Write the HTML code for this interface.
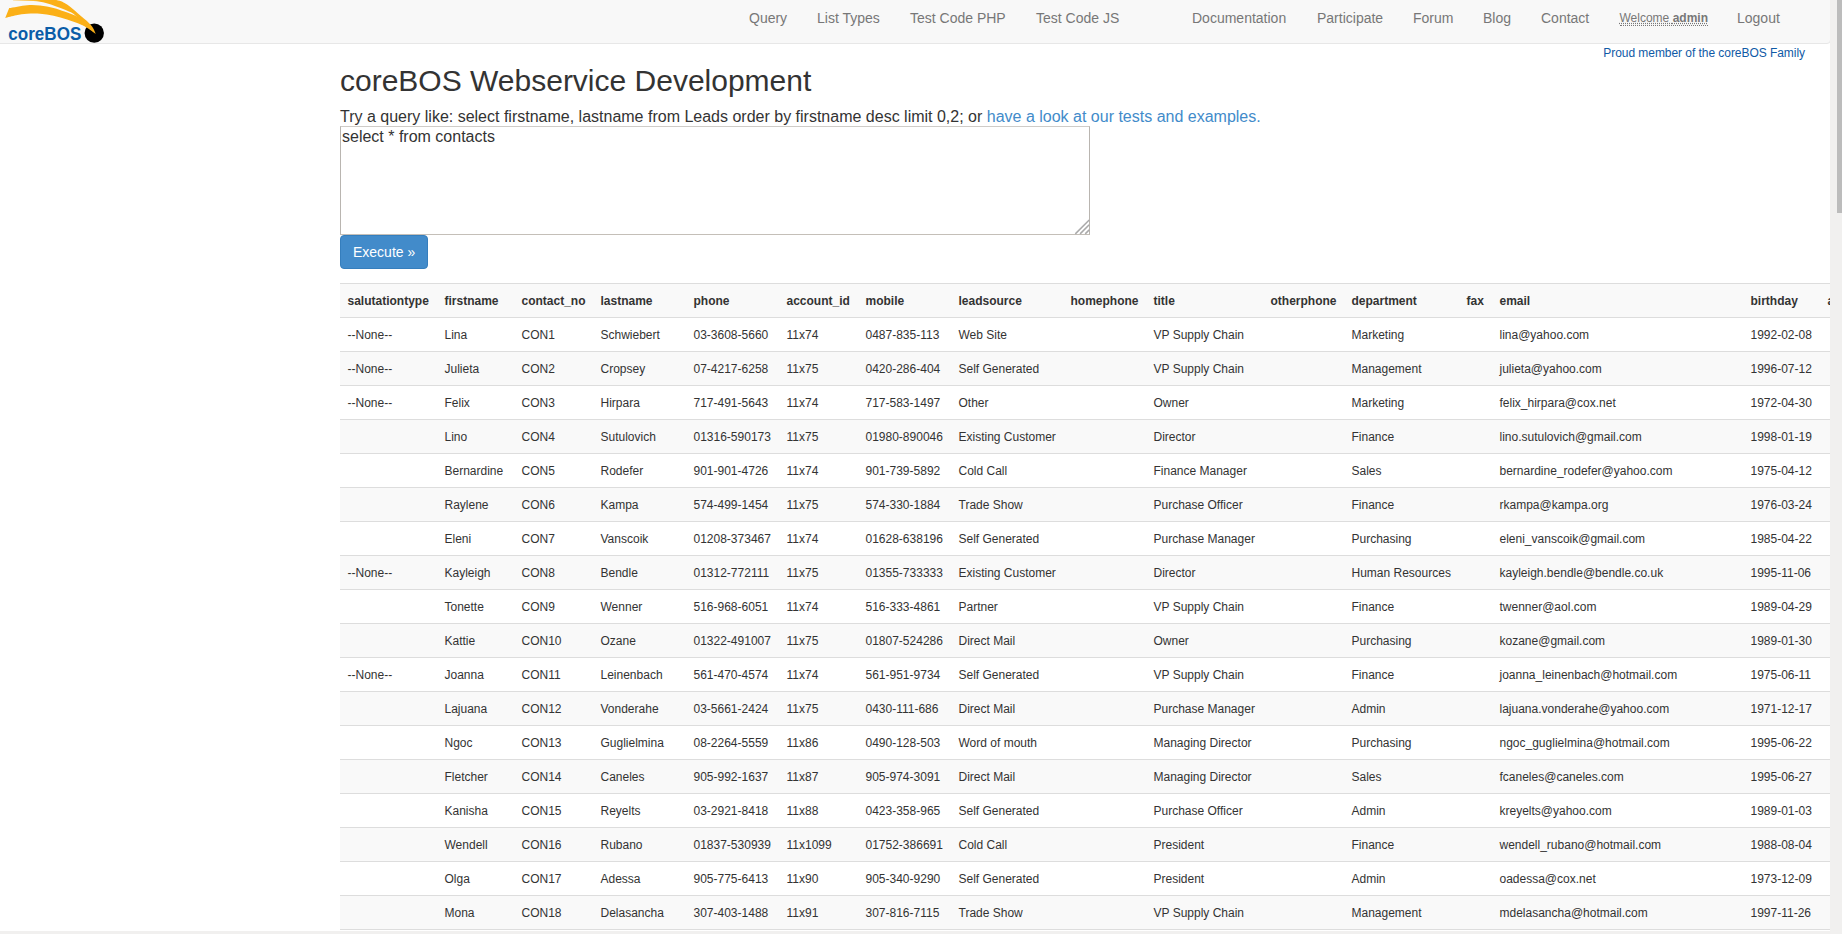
<!DOCTYPE html>
<html><head><meta charset="utf-8"><title>coreBOS Webservice Development</title>
<style>
html,body{margin:0;padding:0;}
body{width:1842px;height:934px;overflow:hidden;position:relative;background:#fff;font-family:"Liberation Sans",sans-serif;color:#333;font-size:14px;line-height:20px;}
.nav{position:absolute;left:-1px;top:-5px;width:1830px;height:47px;background:#f8f8f8;border:1px solid #e7e7e7;border-radius:0 0 4px 0;box-sizing:content-box;}
.logo{position:absolute;left:0;top:0;}
.ni{position:absolute;top:8px;font-size:14px;line-height:20px;color:#777;white-space:nowrap;}
.ni abbr{font-size:12px;line-height:12px;text-decoration:underline dotted;border-bottom:1px dotted #777;}
.proud{position:absolute;right:37px;top:45px;font-size:12px;line-height:17px;color:#0f5aa6;white-space:nowrap;letter-spacing:-0.05px;}
h1{position:absolute;left:340px;top:63px;margin:0;font-size:30px;line-height:36px;font-weight:normal;color:#333;white-space:nowrap;}
.intro{position:absolute;left:340px;top:106px;font-size:16px;line-height:22px;white-space:nowrap;}
.intro a{color:#428bca;text-decoration:none;}
.ta{position:absolute;left:340px;top:126px;width:748px;height:107px;border:1px solid #b9b5b0;border-top-color:#cfccc8;border-bottom-color:#c4bfb8;background:#fff;}
.ta span{position:absolute;left:1px;top:1px;font-size:16px;line-height:18px;white-space:nowrap;}
.grip{position:absolute;right:0;bottom:0;}
.btn{position:absolute;left:340px;top:235px;width:86px;height:32px;background:#428bca;border:1px solid #357ebd;border-radius:4px;color:#fff;font-size:14px;line-height:20px;}
.btn span{position:absolute;left:12px;top:6px;white-space:nowrap;}
table.res{position:absolute;left:340px;top:283px;border-collapse:collapse;table-layout:fixed;width:1600px;font-size:12px;}
table.res td,table.res th{padding:9px 8px 7px 7.5px;line-height:17px;border-top:1px solid #ddd;text-align:left;white-space:nowrap;overflow:hidden;vertical-align:top;}
table.res th{font-weight:bold;}
table.res tr:nth-child(odd){background:#f9f9f9;}
.vs{position:absolute;left:1830px;top:0;width:12px;height:934px;background:#f1f0ef;}
.vth{position:absolute;left:1837px;top:0;width:5px;height:213px;background:#bcbcbc;}
.hs{position:absolute;left:0;top:931px;width:1842px;height:3px;background:#f1f0ef;}
</style></head><body>
<div class="nav"></div>
<svg class="logo" width="110" height="44" viewBox="0 0 110 44">
  <defs><linearGradient id="fade" x1="13" y1="0" x2="40" y2="0" gradientUnits="userSpaceOnUse"><stop offset="0" stop-color="#fbb017" stop-opacity="0.25"/><stop offset="1" stop-color="#fbb017" stop-opacity="1"/></linearGradient></defs>
  <circle cx="94.25" cy="33.1" r="9.7" fill="#000"/>
  <path d="M13.00,-1.50 C16.67,-1.50 27.78,-1.75 35.00,-1.50 C42.22,-1.25 50.95,-1.02 56.30,0.00 C61.65,1.02 63.48,2.33 67.10,4.60 C70.72,6.87 74.37,10.53 78.00,13.60 C81.63,16.67 86.40,20.60 88.90,23.00 C91.40,25.40 91.87,26.18 93.00,28.00 C94.13,29.82 95.25,32.92 95.70,33.90 L95.70,33.90 C94.08,32.50 89.18,28.35 86.00,25.50 C82.82,22.65 78.83,18.83 76.60,16.80 C74.37,14.77 74.63,14.52 72.60,13.30 C70.57,12.08 67.57,10.82 64.40,9.50 C61.23,8.18 57.17,6.62 53.60,5.40 C50.03,4.18 46.95,2.92 43.00,2.20 C39.05,1.48 34.90,1.32 29.90,1.10 C24.90,0.88 15.82,0.93 13.00,0.90 Z" fill="url(#fade)"/>
  <path d="M5.2,17.9 L9.2,8.1 C12.18,7.62 21.97,5.63 27.10,5.20 C32.23,4.77 35.58,5.05 40.00,5.50 C44.42,5.95 49.53,6.92 53.60,7.90 C57.67,8.88 61.23,10.32 64.40,11.40 C67.57,12.48 70.00,13.27 72.60,14.40 C75.20,15.53 77.43,16.43 80.00,18.20 C82.57,19.97 85.38,22.38 88.00,25.00 C90.62,27.62 94.42,32.42 95.70,33.90 L95.70,33.90 C94.20,32.85 89.20,29.18 86.70,27.60 C84.20,26.02 83.97,25.75 80.70,24.40 C77.43,23.05 71.62,20.95 67.10,19.50 C62.58,18.05 58.12,16.67 53.60,15.70 C49.08,14.73 44.42,14.02 40.00,13.70 C35.58,13.38 31.05,13.55 27.10,13.80 C23.15,14.05 19.95,14.52 16.30,15.20 C12.65,15.88 7.05,17.45 5.20,17.90 Z" fill="#fbb017"/>
  <text x="8.3" y="40.4" font-family="Liberation Sans" font-weight="bold" font-size="18" fill="#0b5da8" textLength="73" lengthAdjust="spacingAndGlyphs">coreBOS</text>
</svg>
<span class="ni" style="left:749px">Query</span>
<span class="ni" style="left:817px">List Types</span>
<span class="ni" style="left:910px">Test Code PHP</span>
<span class="ni" style="left:1036px">Test Code JS</span>
<span class="ni" style="left:1192px">Documentation</span>
<span class="ni" style="left:1317px">Participate</span>
<span class="ni" style="left:1413px">Forum</span>
<span class="ni" style="left:1483px">Blog</span>
<span class="ni" style="left:1541px">Contact</span>
<span class="ni" style="left:1619.5px;top:7px"><abbr>Welcome <b>admin</b></abbr></span>
<span class="ni" style="left:1737px">Logout</span>
<span class="proud">Proud member of the coreBOS Family</span>
<h1>coreBOS Webservice Development</h1>
<div class="intro">Try a query like: select firstname, lastname from Leads order by firstname desc limit 0,2; or <a>have a look at our tests and examples.</a></div>
<div class="ta"><span>select * from contacts</span>
</div>
<svg style="position:absolute;left:1074px;top:219px" width="16" height="16" viewBox="0 0 16 16"><path d="M1.3,14.9 L15.2,1 M6.1,14.9 L15.2,5.8 M11.2,14.9 L15.2,10.9" stroke="#aaaaaa" stroke-width="1.5" fill="none"/></svg>
<div class="btn"><span>Execute &raquo;</span></div>
<table class="res"><colgroup><col style="width:97px"><col style="width:77px"><col style="width:79px"><col style="width:93px"><col style="width:93px"><col style="width:79px"><col style="width:93px"><col style="width:112px"><col style="width:83px"><col style="width:117px"><col style="width:81px"><col style="width:115px"><col style="width:33px"><col style="width:251px"><col style="width:77px"><col style="width:120px"></colgroup><tbody>
<tr><th>salutationtype</th><th>firstname</th><th>contact_no</th><th>lastname</th><th>phone</th><th>account_id</th><th>mobile</th><th>leadsource</th><th>homephone</th><th>title</th><th>otherphone</th><th>department</th><th>fax</th><th>email</th><th>birthday</th><th>assigned_user_id</th></tr>
<tr><td>--None--</td><td>Lina</td><td>CON1</td><td>Schwiebert</td><td>03-3608-5660</td><td>11x74</td><td>0487-835-113</td><td>Web Site</td><td></td><td>VP Supply Chain</td><td></td><td>Marketing</td><td></td><td>lina@yahoo.com</td><td>1992-02-08</td><td></td></tr>
<tr><td>--None--</td><td>Julieta</td><td>CON2</td><td>Cropsey</td><td>07-4217-6258</td><td>11x75</td><td>0420-286-404</td><td>Self Generated</td><td></td><td>VP Supply Chain</td><td></td><td>Management</td><td></td><td>julieta@yahoo.com</td><td>1996-07-12</td><td></td></tr>
<tr><td>--None--</td><td>Felix</td><td>CON3</td><td>Hirpara</td><td>717-491-5643</td><td>11x74</td><td>717-583-1497</td><td>Other</td><td></td><td>Owner</td><td></td><td>Marketing</td><td></td><td>felix_hirpara@cox.net</td><td>1972-04-30</td><td></td></tr>
<tr><td></td><td>Lino</td><td>CON4</td><td>Sutulovich</td><td>01316-590173</td><td>11x75</td><td>01980-890046</td><td>Existing Customer</td><td></td><td>Director</td><td></td><td>Finance</td><td></td><td>lino.sutulovich@gmail.com</td><td>1998-01-19</td><td></td></tr>
<tr><td></td><td>Bernardine</td><td>CON5</td><td>Rodefer</td><td>901-901-4726</td><td>11x74</td><td>901-739-5892</td><td>Cold Call</td><td></td><td>Finance Manager</td><td></td><td>Sales</td><td></td><td>bernardine_rodefer@yahoo.com</td><td>1975-04-12</td><td></td></tr>
<tr><td></td><td>Raylene</td><td>CON6</td><td>Kampa</td><td>574-499-1454</td><td>11x75</td><td>574-330-1884</td><td>Trade Show</td><td></td><td>Purchase Officer</td><td></td><td>Finance</td><td></td><td>rkampa@kampa.org</td><td>1976-03-24</td><td></td></tr>
<tr><td></td><td>Eleni</td><td>CON7</td><td>Vanscoik</td><td>01208-373467</td><td>11x74</td><td>01628-638196</td><td>Self Generated</td><td></td><td>Purchase Manager</td><td></td><td>Purchasing</td><td></td><td>eleni_vanscoik@gmail.com</td><td>1985-04-22</td><td></td></tr>
<tr><td>--None--</td><td>Kayleigh</td><td>CON8</td><td>Bendle</td><td>01312-772111</td><td>11x75</td><td>01355-733333</td><td>Existing Customer</td><td></td><td>Director</td><td></td><td>Human Resources</td><td></td><td>kayleigh.bendle@bendle.co.uk</td><td>1995-11-06</td><td></td></tr>
<tr><td></td><td>Tonette</td><td>CON9</td><td>Wenner</td><td>516-968-6051</td><td>11x74</td><td>516-333-4861</td><td>Partner</td><td></td><td>VP Supply Chain</td><td></td><td>Finance</td><td></td><td>twenner@aol.com</td><td>1989-04-29</td><td></td></tr>
<tr><td></td><td>Kattie</td><td>CON10</td><td>Ozane</td><td>01322-491007</td><td>11x75</td><td>01807-524286</td><td>Direct Mail</td><td></td><td>Owner</td><td></td><td>Purchasing</td><td></td><td>kozane@gmail.com</td><td>1989-01-30</td><td></td></tr>
<tr><td>--None--</td><td>Joanna</td><td>CON11</td><td>Leinenbach</td><td>561-470-4574</td><td>11x74</td><td>561-951-9734</td><td>Self Generated</td><td></td><td>VP Supply Chain</td><td></td><td>Finance</td><td></td><td>joanna_leinenbach@hotmail.com</td><td>1975-06-11</td><td></td></tr>
<tr><td></td><td>Lajuana</td><td>CON12</td><td>Vonderahe</td><td>03-5661-2424</td><td>11x75</td><td>0430-111-686</td><td>Direct Mail</td><td></td><td>Purchase Manager</td><td></td><td>Admin</td><td></td><td>lajuana.vonderahe@yahoo.com</td><td>1971-12-17</td><td></td></tr>
<tr><td></td><td>Ngoc</td><td>CON13</td><td>Guglielmina</td><td>08-2264-5559</td><td>11x86</td><td>0490-128-503</td><td>Word of mouth</td><td></td><td>Managing Director</td><td></td><td>Purchasing</td><td></td><td>ngoc_guglielmina@hotmail.com</td><td>1995-06-22</td><td></td></tr>
<tr><td></td><td>Fletcher</td><td>CON14</td><td>Caneles</td><td>905-992-1637</td><td>11x87</td><td>905-974-3091</td><td>Direct Mail</td><td></td><td>Managing Director</td><td></td><td>Sales</td><td></td><td>fcaneles@caneles.com</td><td>1995-06-27</td><td></td></tr>
<tr><td></td><td>Kanisha</td><td>CON15</td><td>Reyelts</td><td>03-2921-8418</td><td>11x88</td><td>0423-358-965</td><td>Self Generated</td><td></td><td>Purchase Officer</td><td></td><td>Admin</td><td></td><td>kreyelts@yahoo.com</td><td>1989-01-03</td><td></td></tr>
<tr><td></td><td>Wendell</td><td>CON16</td><td>Rubano</td><td>01837-530939</td><td>11x1099</td><td>01752-386691</td><td>Cold Call</td><td></td><td>President</td><td></td><td>Finance</td><td></td><td>wendell_rubano@hotmail.com</td><td>1988-08-04</td><td></td></tr>
<tr><td></td><td>Olga</td><td>CON17</td><td>Adessa</td><td>905-775-6413</td><td>11x90</td><td>905-340-9290</td><td>Self Generated</td><td></td><td>President</td><td></td><td>Admin</td><td></td><td>oadessa@cox.net</td><td>1973-12-09</td><td></td></tr>
<tr><td></td><td>Mona</td><td>CON18</td><td>Delasancha</td><td>307-403-1488</td><td>11x91</td><td>307-816-7115</td><td>Trade Show</td><td></td><td>VP Supply Chain</td><td></td><td>Management</td><td></td><td>mdelasancha@hotmail.com</td><td>1997-11-26</td><td></td></tr>
<tr><td></td><td>Emily</td><td>CON19</td><td>Scoggins</td><td>01902-123456</td><td>11x92</td><td>01902-654321</td><td>Cold Call</td><td></td><td>Director</td><td></td><td>Sales</td><td></td><td>emily@scoggins.com</td><td>1980-01-01</td><td></td></tr>
</tbody></table>
<div class="vs"></div><div class="vth"></div><div class="hs"></div>
</body></html>
